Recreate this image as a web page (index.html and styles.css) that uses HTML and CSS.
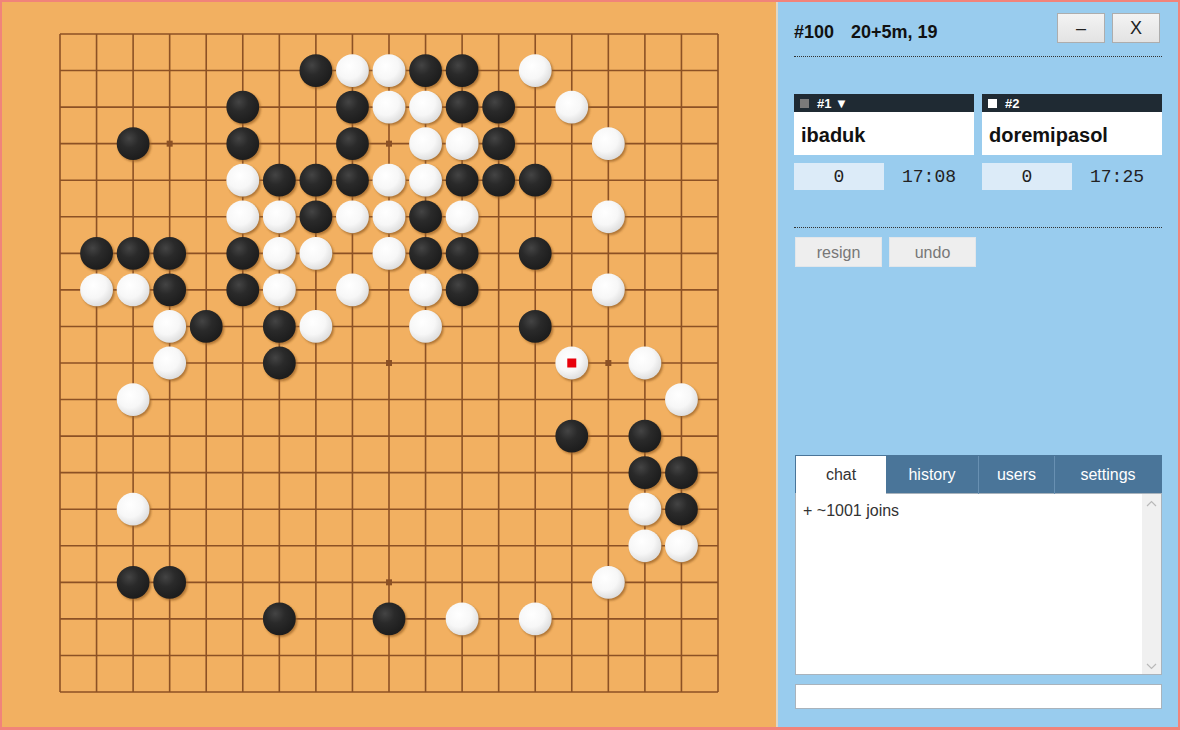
FILE: index.html
```html
<!DOCTYPE html>
<html lang="en">
<head>
    <meta charset="UTF-8">
    <meta name="viewport" content="width=device-width, initial-scale=1.0">
    <title>Game #100</title>
    <link rel="stylesheet" href="styles.css">
</head>
<body>
    <div class="frame">
        <div class="board">
            <svg id="goban" width="698" height="698" viewBox="0 0 698 698">
                <defs>
                    <radialGradient id="blackStone" cx="38%" cy="34%" r="65%">
                        <stop offset="0" stop-color="#444"/>
                        <stop offset="0.45" stop-color="#2a2a2a"/>
                        <stop offset="1" stop-color="#1d1d1d"/>
                    </radialGradient>
                    <radialGradient id="whiteStone" cx="40%" cy="36%" r="65%">
                        <stop offset="0" stop-color="#ffffff"/>
                        <stop offset="0.6" stop-color="#f7f7f7"/>
                        <stop offset="1" stop-color="#dedede"/>
                    </radialGradient>
                    <filter id="soft" x="-20%" y="-20%" width="140%" height="140%">
                        <feGaussianBlur stdDeviation="0.8"/>
                    </filter>
                </defs>
                <g id="grid"></g>
                <g id="stones"></g>
            </svg>
        </div>

        <div class="panel">
            <div class="head">
                <div class="title"><span class="game-no">#100</span>20+5m, 19</div>
                <div class="win-btns">
                    <button class="win-btn">&ndash;</button>
                    <button class="win-btn">X</button>
                </div>
            </div>
            <div class="rule"></div>

            <div class="players">
                <div class="player">
                    <div class="player-bar"><span class="swatch swatch-black"></span>#1 &#9660;</div>
                    <div class="player-name">ibaduk</div>
                    <div class="player-stats">
                        <div class="captures">0</div>
                        <div class="clock">17:08</div>
                    </div>
                </div>
                <div class="player">
                    <div class="player-bar"><span class="swatch swatch-white"></span>#2</div>
                    <div class="player-name">doremipasol</div>
                    <div class="player-stats">
                        <div class="captures">0</div>
                        <div class="clock">17:25</div>
                    </div>
                </div>
            </div>
            <div class="rule rule-low"></div>

            <div class="actions">
                <button class="action">resign</button>
                <button class="action">undo</button>
            </div>

            <div class="chat">
                <div class="tabs">
                    <div class="tab tab-active">chat</div>
                    <div class="tab">history</div>
                    <div class="tab">users</div>
                    <div class="tab">settings</div>
                </div>
                <div class="chat-log">
                    <div class="chat-lines">
                        <div>+ ~1001 joins</div>
                    </div>
                    <div class="scrollbar">
                        <svg width="11" height="7" viewBox="0 0 11 7"><path d="M1 6 L5.5 1.5 L10 6" fill="none" stroke="#b9b9b9" stroke-width="1.2"/></svg>
                        <svg width="11" height="7" viewBox="0 0 11 7"><path d="M1 1 L5.5 5.5 L10 1" fill="none" stroke="#b9b9b9" stroke-width="1.2"/></svg>
                    </div>
                </div>
                <input class="chat-input" type="text">
            </div>
        </div>
    </div>

    <script>
        var position = [
            "...................",
            ".......XOOXX.O.....",
            ".....X..XOOXX.O....",
            "..X..X..X.OOX..O...",
            ".....OXXXOOXXX.....",
            ".....OOXOOXO...O...",
            ".XXX.XOO.OXX.X.....",
            ".OOX.XO.O.OX...O...",
            "...OX.XO..O..X.....",
            "...O..X.......O.O..",
            "..O..............O.",
            "..............X.X..",
            "................XX.",
            "..O.............OX.",
            "................OO.",
            "..XX...........O...",
            "......X..X.O.O.....",
            "...................",
            "..................."
        ];
        var lastMove = [14, 9];
        var size = 19, edge = 20, step = 658 / 18, radius = 16.4;

        function pos(i) { return edge + i * step; }

        var grid = "";
        for (var i = 0; i < size; i++) {
            grid += '<line x1="' + pos(i) + '" y1="' + edge + '" x2="' + pos(i) + '" y2="' + pos(18) + '"/>';
            grid += '<line x1="' + edge + '" y1="' + pos(i) + '" x2="' + pos(18) + '" y2="' + pos(i) + '"/>';
        }
        [3, 9, 15].forEach(function (a) {
            [3, 9, 15].forEach(function (b) {
                grid += '<rect class="hoshi" x="' + (pos(a) - 3) + '" y="' + (pos(b) - 3) + '" width="6" height="6"/>';
            });
        });
        document.getElementById("grid").innerHTML = grid;

        var stones = "";
        for (var r = 0; r < size; r++) {
            for (var c = 0; c < size; c++) {
                var s = position[r].charAt(c);
                if (s === ".") continue;
                var x = pos(c), y = pos(r);
                stones += '<circle class="shadow" cx="' + (x + 1.6) + '" cy="' + (y + 1.8) + '" r="' + radius + '" filter="url(#soft)"/>';
                stones += '<circle cx="' + x + '" cy="' + y + '" r="' + radius + '" fill="url(#' + (s === "X" ? "blackStone" : "whiteStone") + ')"/>';
            }
        }
        stones += '<rect x="' + (pos(lastMove[0]) - 4.5) + '" y="' + (pos(lastMove[1]) - 4.5) + '" width="9" height="9" fill="#e8000b"/>';
        document.getElementById("stones").innerHTML = stones;
    </script>
</body>
</html>
```

FILE: styles.css
```css
html, body {
    margin: 0;
    padding: 0;
}
body {
    font-family: "Liberation Sans", Arial, sans-serif;
    color: #111;
}
.frame {
    display: flex;
    height: 730px;
    box-sizing: border-box;
    border: 2px solid #f1837a;
    border-bottom-width: 3px;
}
.board {
    width: 774px;
    flex-shrink: 0;
    box-sizing: border-box;
    padding: 12px 0 0 38px;
    background: #f2b061;
}
#goban {
    display: block;
}
#grid line {
    stroke: #8c5125;
    stroke-width: 1.6;
}
.hoshi {
    fill: #8c5125;
}
.shadow {
    fill: #9a6227;
    opacity: 0.75;
}
.panel {
    flex: 1;
    display: flex;
    flex-direction: column;
    background: #99ccee;
    border-left: 2px solid #e0d6c4;
    padding: 11px 16px 18px;
}
.head {
    display: flex;
    justify-content: space-between;
    height: 30px;
}
.title {
    font-size: 18px;
    font-weight: bold;
    margin-top: 9px;
}
.game-no {
    margin-right: 17px;
}
.win-btns {
    display: flex;
    gap: 7px;
    margin-right: 2px;
}
.win-btn {
    width: 48px;
    height: 30px;
    padding: 0;
    font-family: "Liberation Sans", Arial, sans-serif;
    font-size: 18px;
    color: #222;
    background: linear-gradient(#f3f3f3, #e3e3e3);
    border: 1px solid #adadad;
}
.rule {
    border-top: 1px dotted #333;
    margin-top: 13px;
}
.players {
    display: flex;
    gap: 8px;
    margin-top: 37px;
}
.player {
    width: 180px;
}
.player-bar {
    display: flex;
    align-items: center;
    height: 18px;
    padding-left: 6px;
    background: #1f2a33;
    color: #fff;
    font-size: 13px;
    font-weight: bold;
}
.swatch {
    width: 9px;
    height: 9px;
    margin-right: 8px;
}
.swatch-black { background: #7a7a7a; }
.swatch-white { background: #fff; }
.player-name {
    height: 43px;
    line-height: 46px;
    padding: 0 7px;
    background: #fff;
    font-size: 20px;
    font-weight: bold;
}
.player-stats {
    display: flex;
    margin-top: 8px;
    height: 27px;
    font-family: "Liberation Mono", "Courier New", monospace;
    font-size: 18px;
    line-height: 28px;
    color: #222;
}
.captures {
    width: 90px;
    text-align: center;
    background: #dcebf8;
}
.clock {
    width: 90px;
    text-align: center;
}
.rule-low {
    margin-top: 37px;
}
.actions {
    display: flex;
    gap: 7px;
    margin-top: 9px;
    padding-left: 1px;
}
.action {
    width: 87px;
    height: 30px;
    padding: 1px 0 0;
    font-family: "Liberation Sans", Arial, sans-serif;
    font-size: 16px;
    color: #777;
    background: #eee;
    border: 1px solid #e2e6ea;
}
.chat {
    margin-top: auto;
    padding-left: 1px;
}
.tabs {
    display: grid;
    grid-template-columns: 90px 92px 76px 1fr;
    height: 38px;
    box-sizing: border-box;
    border: 1px solid #4a7599;
    border-bottom: none;
    background: #4a7599;
}
.tab {
    line-height: 38px;
    text-align: center;
    font-size: 16px;
    color: #fff;
}
.tab + .tab + .tab {
    border-left: 1px solid #6890b2;
}
.tab-active {
    background: #fff;
    color: #333;
}
.chat-log {
    display: flex;
    height: 182px;
    box-sizing: border-box;
    background: #fff;
    border: 1px solid #a9b3bc;
}
.chat-lines {
    flex: 1;
    padding: 8px 7px;
    font-size: 16px;
    color: #333;
}
.scrollbar {
    width: 19px;
    background: #f0f0f0;
    display: flex;
    flex-direction: column;
    justify-content: space-between;
    align-items: center;
    padding: 6px 0 4px;
}
.chat-input {
    display: block;
    width: 100%;
    height: 25px;
    box-sizing: border-box;
    margin: 9px 0 0;
    border: 1px solid #a9b3bc;
    background: #fff;
}
```
